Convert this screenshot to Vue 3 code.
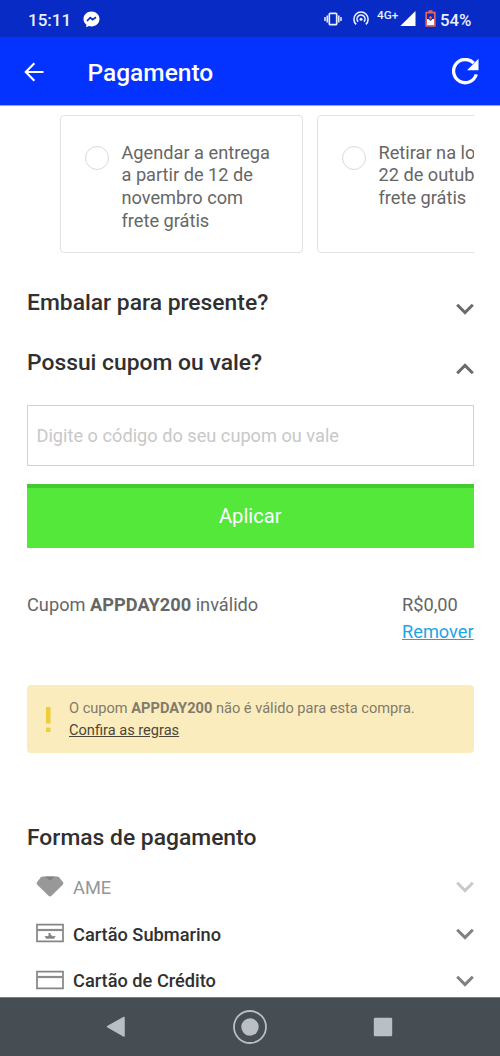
<script setup>
const deliveries = [
  { lines: ['Agendar a entrega', 'a partir de 12 de', 'novembro com', 'frete grátis'] },
  { lines: ['Retirar na loja dia', '22 de outubro com', 'frete grátis'] },
]
const payments = [
  { label: 'AME', icon: 'gem', disabled: true },
  { label: 'Cartão Submarino', icon: 'store' },
  { label: 'Cartão de Crédito', icon: 'card' },
]
</script>

<template>
  <div class="screen">
    <header>
      <div class="status">
        <span class="time">15:11</span>
        <svg class="messenger" width="17" height="17" viewBox="0 0 17 17">
          <path d="M8.500.5C4 .5.5 3.700.5 8c0 2.400 1.100 4.300 2.800 5.600v2.700l2.500-1.300c.9.3 1.700.4 2.700.4 4.500 0 8-3.200 8-7.400S13 .5 8.500.5z" fill="#fff" />
          <path d="M4 10l3.200-3.400 2.400 2L13 6.300" fill="none" stroke="#0a2bb8" stroke-width="1.700" />
        </svg>
        <div class="indicators">
          <svg class="vibrate" width="18" height="14" viewBox="0 0 18 14" fill="none" stroke="#e8efff" stroke-width="1.700">
            <rect x="5.300" y="1.300" width="7.400" height="11.400" rx="1" />
            <path d="M3.200 3.500v7M1 5v4M14.800 3.500v7M17 5v4" stroke-width="1.500" />
          </svg>
          <svg class="hotspot" width="16" height="15" viewBox="0 0 16 15" fill="none" stroke="#e8efff" stroke-width="1.600">
            <path d="M3.200 13.400a7.100 7.100 0 1 1 9.600 0M5.100 10.800a4 4 0 1 1 5.800 0" />
            <circle cx="8" cy="8.300" r="1.500" fill="#e8efff" stroke="none" />
          </svg>
          <span class="network">4G+</span>
          <svg class="signal" width="16" height="15" viewBox="0 0 16 15"><path d="M15.500 0v15H.3z" fill="#fff" /></svg>
          <svg class="battery" width="11" height="17" viewBox="0 0 11 17">
            <path d="M3.500 1.200h4M1.200 2.700h8.600v13.200H1.200z" fill="none" stroke="#e2685f" stroke-width="1.700" />
            <path d="M2 9h1.500l2 2L7.500 9H9v6H2z" fill="#fff" />
            <path d="M5.500 6v3.500M4 7.700h3" stroke="#e2685f" stroke-width="1.200" />
          </svg>
          <span class="percent">54%</span>
        </div>
      </div>
      <div class="appbar">
        <svg class="back" width="20" height="20" viewBox="0 0 20 20" fill="none" stroke="#fff" stroke-width="2.100">
          <path d="M19.500 10H2M10.400 1.200L1.700 10l8.700 8.800" />
        </svg>
        <h1>Pagamento</h1>
        <svg class="reload" width="27" height="27" viewBox="0 0 27 27">
          <path d="M24.300 16.400A11.600 11.600 0 1 1 21.700 5.200" fill="none" stroke="#fff" stroke-width="3.300" />
          <path d="M26.500.8v11.400H15.100z" fill="#fff" />
        </svg>
      </div>
    </header>

    <main>
      <div class="deliveries">
        <article v-for="(d, i) in deliveries" :key="i" class="delivery">
          <i class="radio"></i>
          <p><span v-for="l in d.lines" :key="l">{{ l }}</span></p>
        </article>
      </div>

      <section class="fold">
        <h2>Embalar para presente?</h2>
        <svg class="chevron" width="18" height="12" viewBox="0 0 18 12"><path d="M1.200 1.800L9 9.600l7.800-7.800" /></svg>
      </section>
      <section class="fold">
        <h2>Possui cupom ou vale?</h2>
        <svg class="chevron" width="18" height="12" viewBox="0 0 18 12"><path d="M1.200 10.200L9 2.400l7.800 7.800" /></svg>
      </section>

      <div class="field"><span>Digite o código do seu cupom ou vale</span></div>
      <button class="apply">Aplicar</button>

      <div class="result">
        <span class="message">Cupom <b>APPDAY200</b> inválido</span>
        <div class="amount"><span>R$0,00</span><a>Remover</a></div>
      </div>

      <div class="alert">
        <svg width="6" height="26" viewBox="0 0 6 26" fill="#f0cc36">
          <rect x="1" y="0" width="4.500" height="16.500" /><rect x="1" y="20.500" width="4.500" height="4.500" rx="1" />
        </svg>
        <div><p>O cupom <b>APPDAY200</b> não é válido para esta compra.</p><a>Confira as regras</a></div>
      </div>

      <h2 class="methods-title">Formas de pagamento</h2>
      <ul>
        <li v-for="p in payments" :key="p.label" :class="{ disabled: p.disabled }">
          <svg v-if="p.icon === 'gem'" class="kind" width="28" height="21" viewBox="0 0 28 21">
            <path d="M6.800.5h14.400q1.100 0 1.800.8l3.900 4.700q1 1.400-.2 2.700L15.500 19.800q-1.500 1.400-3 0L1.300 8.700Q.1 7.400 1.100 6L5 1.300Q5.700.5 6.800.5z" fill="#989898" />
            <path d="M9 .5h10L14 4.700z" fill="#818181" />
          </svg>
          <svg v-else class="kind" width="28" height="20" viewBox="0 0 28 20">
            <path d="M1 1.700h26v16.600H1z" fill="none" stroke="#858585" stroke-width="1.700" />
            <path d="M1 7h26" stroke="#8c8c8c" stroke-width="2.200" />
            <path v-if="p.icon === 'store'" d="M8.500 13.300l4-.4V10h2v1.700l1.200.2v1l4 .4-1.500 2.400h-8z" fill="#858585" />
          </svg>
          <span>{{ p.label }}</span>
          <svg class="chevron" width="18" height="12" viewBox="0 0 18 12"><path d="M1.200 1.800L9 9.600l7.800-7.800" /></svg>
        </li>
      </ul>
    </main>

    <nav>
      <svg width="20" height="22" viewBox="0 0 20 22"><path d="M18 1.500v18.500L1.500 10.700z" fill="#b9bfc4" stroke="#b9bfc4" stroke-width="1.500" stroke-linejoin="round" /></svg>
      <svg width="36" height="36" viewBox="0 0 36 36"><circle cx="18" cy="18" r="16" fill="none" stroke="#b9bfc4" stroke-width="1.800" /><circle cx="18" cy="18" r="8.700" fill="#b9bfc4" /></svg>
      <svg width="20" height="20" viewBox="0 0 20 20"><rect x=".8" y=".8" width="18.400" height="18.400" rx="1.200" fill="#b9bfc4" /></svg>
    </nav>
  </div>
</template>

<style>
body { margin: 0; }
</style>

<style scoped>
* { box-sizing: border-box; margin: 0; padding: 0; }
svg { display: block; flex: none; }
.screen { width: 500px; height: 1056px; display: flex; flex-direction: column; overflow: hidden; background: #fff; font-family: Roboto, "Liberation Sans", sans-serif; color: #666; white-space: nowrap; }
header { flex: none; height: 105px; background: #0433ff; color: #fff; }
.status { height: 37px; background: #072bc4; display: flex; align-items: center; padding: 2px 28px 0; font-weight: 500; color: #eaf0ff; }
.time { width: 55px; font-size: 17px; }
.messenger { margin-top: -1px; }
.indicators { margin-left: auto; display: flex; align-items: center; }
.vibrate { margin: -2px 11px 0 0; }
.hotspot { margin: -2px 8px 0 0; }
.network { font-size: 11.800px; width: 23px; margin-top: -9px; }
.signal { margin: -2px 9px 0 0; }
.battery { margin: -2px 4px 0 0; }
.percent { font-size: 16.800px; width: 32px; }
.appbar { height: 68px; display: flex; align-items: center; padding: 2px 21px 0 24px; }
.back { margin-top: -1px; }
h1 { margin: 0 0 0 43.500px; font-size: 24.500px; font-weight: 500; }
.reload { margin-left: auto; margin-top: -1px; }
main { flex: 1; min-height: 0; overflow: hidden; padding: 10px 26.500px 0 27px; border-top: 1px solid #8ea2ff; }
.deliveries { margin: -1px 0 0 32.500px; display: flex; gap: 13.500px; overflow: hidden; }
.delivery { flex: none; width: 243.500px; height: 138px; border: 1.500px solid #e2e2e2; border-radius: 4px; display: flex; padding: 25.500px 0 0 24px; }
.radio { width: 24.500px; height: 24.500px; margin-top: 4px; border: 1.500px solid #d9d9d9; border-radius: 50%; }
.delivery p { margin-left: 12.500px; font-size: 18.200px; line-height: 22.700px; }
.delivery span { display: block; }
.fold { display: flex; justify-content: space-between; height: 60px; }
.deliveries + .fold { margin-top: 36px; }
h2 { font-size: 22.850px; line-height: 28px; font-weight: 500; color: #303030; }
.chevron { fill: none; stroke: #6b6b6b; stroke-width: 3; }
.fold .chevron { margin-top: 14px; }
.field { height: 61px; margin-top: -4.500px; border: 1px solid #d2d2d2; padding-left: 8.500px; display: flex; align-items: center; font-size: 18.200px; color: #c8c8c8; }
.apply { display: block; width: 100%; height: 64px; margin-top: 18px; padding-bottom: 4px; border: 0; border-top: 4px solid #43c931; background: #53e83a; color: #fff; font: 400 20.200px Roboto, sans-serif; }
.result { display: flex; justify-content: space-between; height: 90px; margin-top: 43px; font-size: 18.230px; line-height: 27.500px; }
.amount { width: 71.500px; }
.amount span, .amount a { display: block; }
.amount a { color: #1ca5e6; text-decoration: underline; }
.alert { height: 68px; margin-top: 4px; padding: 12.500px 0 0 18px; display: flex; background: #fbecbe; border-radius: 4px; font-size: 14.600px; line-height: 22px; color: #817b6b; }
.alert svg { margin: 10px 18px 0 0; }
.alert a { color: #4b4637; text-decoration: underline; }
.methods-title { margin-top: 71px; }
ul { list-style: none; margin-top: 12.500px; }
li { height: 46.800px; display: flex; align-items: center; padding-left: 9px; font-size: 18.230px; font-weight: 500; color: #303030; }
.kind { margin-right: 9px; margin-top: -2px; }
li .chevron { margin-left: auto; stroke: #808080; }
li.disabled { font-weight: 400; color: #969696; }
li.disabled .chevron { stroke: #c9c9c9; }
nav { flex: none; height: 59px; background: #464e54; border-top: 1px solid #777d80; display: flex; justify-content: space-between; align-items: center; padding: 0 107px 0 106px; }
</style>
